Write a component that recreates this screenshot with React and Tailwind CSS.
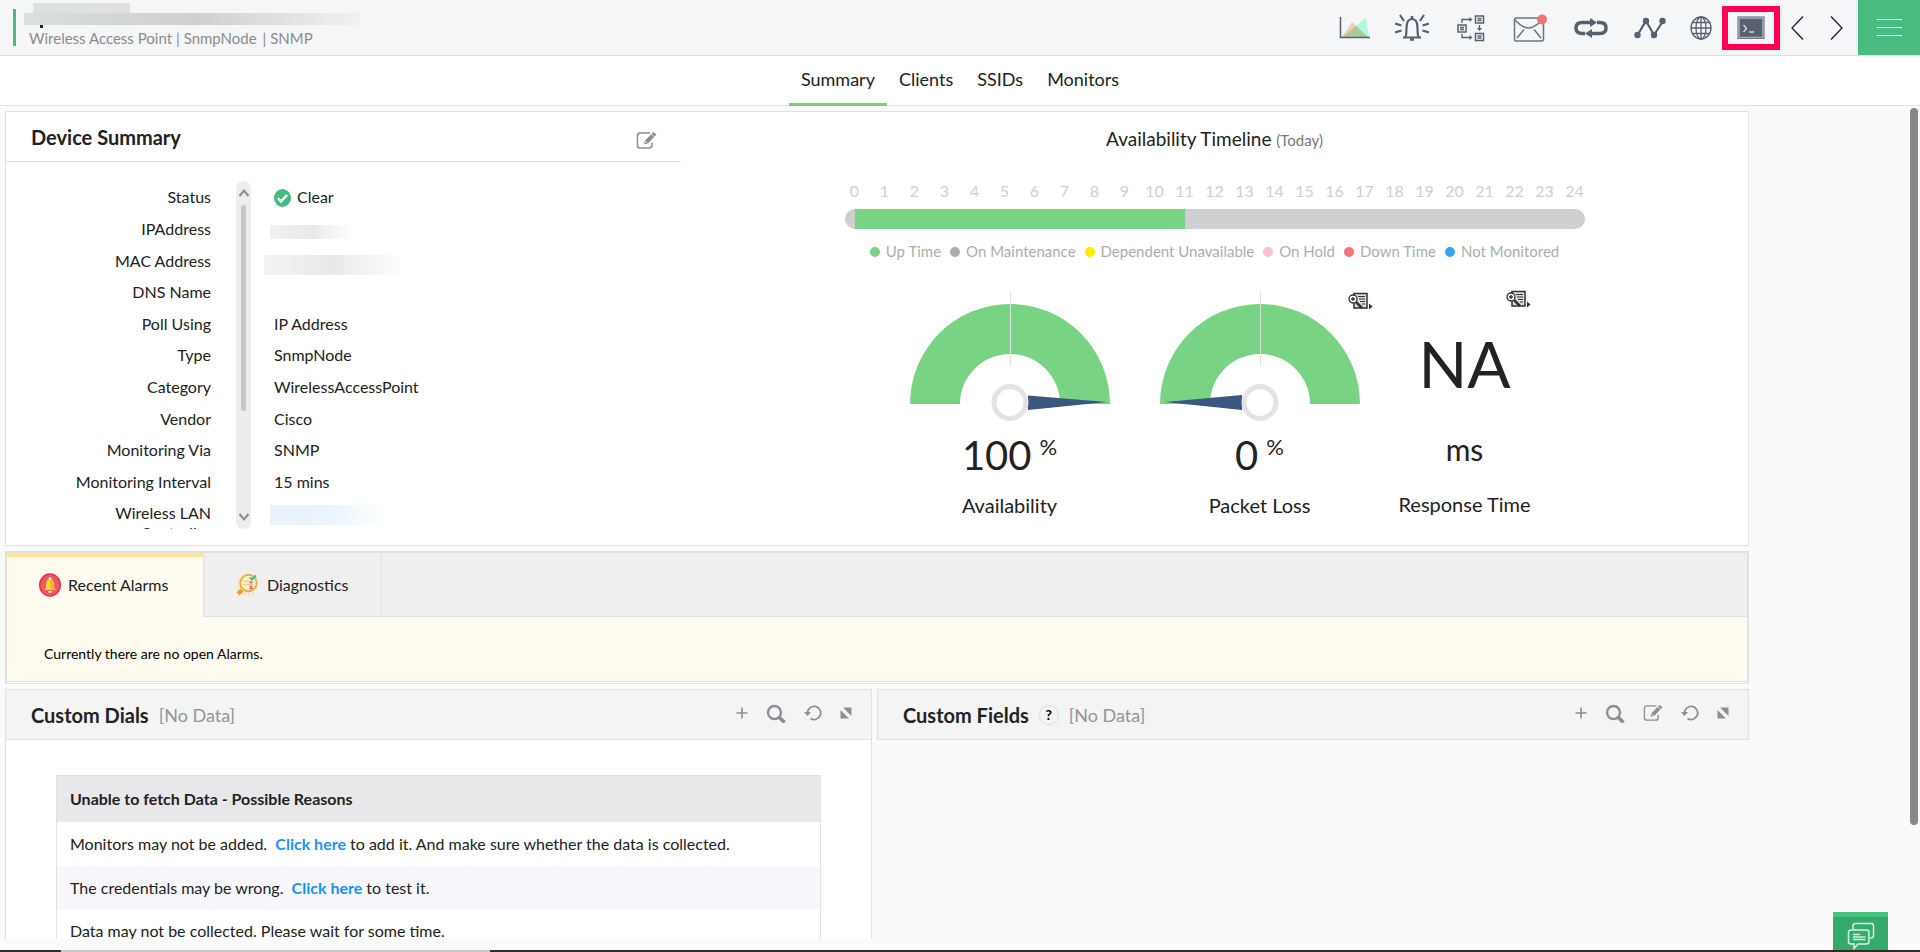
import React, { useState } from 'react';

const NAV_TABS = ['Summary', 'Clients', 'SSIDs', 'Monitors'];

const DETAILS = [
  { label: 'IPAddress', redacted: 'ip' },
  { label: 'MAC Address', redacted: 'mac' },
  { label: 'DNS Name', value: '' },
  { label: 'Poll Using', value: 'IP Address' },
  { label: 'Type', value: 'SnmpNode' },
  { label: 'Category', value: 'WirelessAccessPoint' },
  { label: 'Vendor', value: 'Cisco' },
  { label: 'Monitoring Via', value: 'SNMP' },
  { label: 'Monitoring Interval', value: '15 mins' },
  { label: 'Wireless LAN Controller', redacted: 'lan' },
];

const HOURS = Array.from({ length: 25 }, (_, i) => i);
const UP_HOURS = 11;

const LEGEND = [
  { label: 'Up Time', dot: 'bg-[#78d385]' },
  { label: 'On Maintenance', dot: 'bg-[#adadad]' },
  { label: 'Dependent Unavailable', dot: 'bg-[#ffeb00]' },
  { label: 'On Hold', dot: 'bg-[#ffc0cb]' },
  { label: 'Down Time', dot: 'bg-[#f57374]' },
  { label: 'Not Monitored', dot: 'bg-[#35a3f1]' },
];

/* ---------- Icons ---------- */

const ChartIcon = () => (
  <svg width="32" height="24" viewBox="0 0 32 24">
    <path d="M3 21 13 6l17 15z" fill="#fdc9b6" />
    <path d="M5 21 18 9l9-7 3 19z" fill="#aefbdc" />
    <path d="M3 21 17 10l12 11z" fill="#b0c69b" />
    <path d="M1.5 1v20.5H31" fill="none" stroke="#57606f" strokeWidth="1.5" />
  </svg>
);

const BellIcon = () => (
  <svg width="34" height="28" viewBox="0 0 34 28" fill="none" stroke="#57606f">
    <path d="M8 23.5h18M10.500 23c1-2 1-5 1-9 0-6 2-9 5.500-9s5.500 3 5.500 9c0 4 0 7 1 9" strokeWidth="2.200" />
    <path d="M17 2v3M15 25.500h4" strokeWidth="2.500" />
    <path d="M5 1l4 6M29 1l-4 6M0 9.500l6.500 2M34 9.500l-6.500 2M0 18.500l6.500-2M34 18.500l-6.500-2" strokeWidth="2.200" />
  </svg>
);

const NetworkIcon = () => (
  <svg width="28" height="28" viewBox="0 0 28 28" fill="none" stroke="#57606f">
    <path d="M1 11h8v7H1zM18.5 2h8v7h-8zM18.5 19.5h8v7h-8z" strokeWidth="1.5" />
    <path d="M3 13.5h4M3 15.5h4M20.5 4.5h4M20.5 6.5h4M20.5 22h4M20.5 24h4M5 9V5.5h8M5 20v3.5h8M22.5 11v4" strokeWidth="1.3" />
    <path d="M12.500 3l3 2.500-3 2.500zM12.500 21l3 2.500-3 2.500zM20 14h5l-2.500 3z" fill="#57606f" stroke="none" />
  </svg>
);

const MailIcon = () => (
  <svg width="34" height="28" viewBox="0 0 34 28" fill="none" stroke="#6c7482" strokeWidth="1.5">
    <rect x="1.500" y="4" width="29" height="23" rx="2" />
    <path d="M2 6c3 3 7 8 13.500 8S26 9 29 6M4 24l7-8.500M28 24l-7-8.500" />
    <circle cx="29" cy="5.500" r="5" fill="#f57374" stroke="none" />
  </svg>
);

const LoopIcon = () => (
  <svg width="36" height="20" viewBox="0 0 36 20" fill="none" stroke="#57606f" strokeWidth="3.5">
    <path d="M12 15.500H9C5 15.500 3 13.500 3 10s2-5.500 6-5.500h10M24 4.500h3c4 0 6 2 6 5.500s-2 5.500-6 5.500H17" />
    <path d="M17 0l7 4.500L17 9zM19 11v9l-7-4.500z" fill="#57606f" stroke="none" />
  </svg>
);

const GraphIcon = () => (
  <svg width="32" height="22" viewBox="0 0 32 22" fill="#57606f">
    <path d="M3.500 18 12 4l8 14 9-14" fill="none" stroke="#57606f" strokeWidth="2.2" />
    <circle cx="3.500" cy="18" r="3.200" />
    <circle cx="12" cy="4" r="3.200" />
    <circle cx="20" cy="18" r="3.200" />
    <circle cx="28.500" cy="4" r="3.200" />
  </svg>
);

const GlobeIcon = () => (
  <svg width="22" height="24" viewBox="0 0 22 24" fill="none" stroke="#57606f" strokeWidth="1.3">
    <ellipse cx="11" cy="12" rx="10" ry="11" />
    <ellipse cx="11" cy="12" rx="5" ry="11" />
    <path d="M11 1v22M1 12h20M2.5 6.5h17M2.5 17.5h17" />
  </svg>
);

const TerminalIcon = () => (
  <svg width="28" height="24" viewBox="0 0 28 24">
    <rect x=".5" y=".5" width="27" height="22.5" fill="#57606f" />
    <rect x="2" y="2" width="24" height="19.5" fill="none" stroke="#a9aeb8" strokeWidth="1.5" />
    <path d="M6.500 9l3 3.500-3 3.500M12 16h5" fill="none" stroke="#cfd3da" strokeWidth="1.5" />
  </svg>
);

const ChevronIcon = ({ flip }) => (
  <svg width="14" height="26" viewBox="0 0 14 26" fill="none" stroke="#1f2228" strokeWidth="1.3">
    <path d={flip ? 'M1 1.500 12 13 1 24.500' : 'M13 1.500 2 13l11 11.500'} />
  </svg>
);

const EditIcon = ({ size = 21 }) => (
  <svg width={size} height={size} viewBox="0 0 21 20" fill="none" stroke="#8b8e93">
    <path d="M14 2.500H4a2.500 2.500 0 0 0-2.500 2.500v10A2.500 2.500 0 0 0 4 17.500h9.500A2.500 2.500 0 0 0 16 15v-3" strokeWidth="1.5" />
    <path d="M8 14l1-4 8.500-8.500L20.500 4 12 13z" fill="#8b8e93" stroke="none" />
    <path d="M15.200 3.200l3 3M9 10.500 11.500 13" stroke="#fff" strokeWidth=".8" />
  </svg>
);

const PlusIcon = () => (
  <svg width="12" height="12" viewBox="0 0 12 12" stroke="#8b8e93" strokeWidth="1.6">
    <path d="M6 .5v11M.5 6h11" />
  </svg>
);

const SearchIcon = () => (
  <svg width="20" height="20" viewBox="0 0 20 20" fill="none" stroke="#8b8e93">
    <circle cx="8.5" cy="9.5" r="6.5" strokeWidth="2.4" />
    <path d="M13 14l5.500 5.500" strokeWidth="3.6" />
  </svg>
);

const RefreshIcon = () => (
  <svg width="18" height="18" viewBox="0 0 18 18">
    <path d="M3.500 9a6.600 6.600 0 1 1 3 5.500" fill="none" stroke="#8b8e93" strokeWidth="1.8" />
    <path d="M0 8h7l-3.500 4z" fill="#8b8e93" />
  </svg>
);

const ExpandIcon = () => (
  <svg width="12" height="12" viewBox="0 0 12 12" fill="#8b8e93">
    <path d="M3 .5h8.500V9zM.5 3v8.500H9z" />
  </svg>
);

const ReportIcon = () => (
  <svg width="25" height="18" viewBox="0 0 25 18" fill="none" stroke="#333">
    <path d="M6 1.500h13v14.500H6z" fill="#ddd" strokeWidth="1.5" />
    <path d="M10 4.500h7M11 7h6M12 9.500h5M14 12h3" strokeWidth="1.1" />
    <path d="M7.500 9.500 14 16" strokeWidth="2.5" />
    <circle cx="5" cy="7" r="4" fill="#fff" strokeWidth="1.3" />
    <path d="M5 5v4M3 7h4" strokeWidth="1.3" />
    <path d="M21 11.500v6l3.500-3z" fill="#333" stroke="none" />
  </svg>
);

const AlarmIcon = () => (
  <svg width="22" height="24" viewBox="0 0 22 24">
    <ellipse cx="11" cy="12" rx="10.200" ry="11" fill="#e75a6b" stroke="#f5303f" strokeWidth="1.6" />
    <path d="M5 17c2-1.500 2-3 2-5.500C7 8 8.500 6 11 6s4 2 4 5.500c0 2.500 0 4 2 5.500z" fill="#fdd22f" />
    <path d="M11 6c2.500 0 4 2 4 5.500 0 2.500 0 4 2 5.500h-5z" fill="#f9b41d" />
    <circle cx="11" cy="5.500" r="1.500" fill="#fff0b0" />
    <path d="M9 18h4a2 2 0 0 1-4 0z" fill="#ffe98a" />
  </svg>
);

const DiagnosticsIcon = () => (
  <svg width="22" height="24" viewBox="0 0 22 24" fill="none">
    <path d="M1 5h9v16H2z" fill="#fde3cf" />
    <circle cx="12.500" cy="10" r="8.200" fill="#fdf0c8" stroke="#e3b544" strokeWidth="2" />
    <path d="M6 17l-4 4" stroke="#f5a01c" strokeWidth="4" />
    <path d="M7 8h6M7 11.500h6" stroke="#f6c9a0" strokeWidth="1.3" />
    <path d="M14 4.500l2 2 4-4" stroke="#3dbd7d" strokeWidth="2" />
    <path d="M13.500 8.500l3 3m0-3-3 3M13.500 13l3 3m0-3-3 3" stroke="#f0566b" strokeWidth="1.3" />
    <path d="M8 21.500h2M12 21.500h2M16 20h2" stroke="#f9cfae" strokeWidth="1.5" />
  </svg>
);

const ChatIcon = () => (
  <svg width="28" height="28" viewBox="0 0 28 28" fill="none" stroke="#d3efdf" strokeWidth="1.5">
    <path d="M6 7V4a2.500 2.500 0 0 1 2.500-2.500h15.500A2.500 2.500 0 0 1 26.500 4v9.500A2.500 2.500 0 0 1 24 16h-1" />
    <path d="M4 8h15.500A2.500 2.500 0 0 1 22 10.500v9a2.500 2.500 0 0 1-2.500 2.500H11l-4 4.500V22H4a2.500 2.500 0 0 1-2.500-2.500v-9A2.500 2.500 0 0 1 4 8z" />
    <path d="M6 12.500h7M6 15h12.500M6 17.500h12.500" />
  </svg>
);

/* ---------- Small parts ---------- */

const IconButton = ({ label, className = '', children }) => (
  <button type="button" aria-label={label} className={`flex items-center justify-center ${className}`}>
    {children}
  </button>
);

// Masked values keep their place in the list
const Redacted = ({ kind }) => {
  if (kind === 'ip') {
    return <span className="mt-3 block h-3.5 w-[83px] -ml-1 bg-linear-to-r from-[#f2f2f2] via-[#e9e9e9] to-white" />;
  }
  if (kind === 'mac') {
    return <span className="mt-2.5 block h-5 w-[140px] -ml-2.5 bg-linear-to-r from-[#f3f3f3] via-[#e9e9e9] to-white" />;
  }
  return <span className="mt-2 block h-5 w-[116px] -ml-1 bg-linear-to-r from-[#e9f2fb] via-[#e9f4fd] to-white" />;
};

const Gauge = ({ value, name, report }) => (
  <div className="relative flex w-[250px] flex-col items-center">
    <svg width="250" height="135" viewBox="0 0 250 135">
      <path d="M25 114a100 100 0 0 1 200 0h-50a50 50 0 0 0-100 0z" fill="#78d385" />
      <path d="M125.500 2v74" stroke="#dfdfdf" />
      {value > 50 ? (
        <path d="M143 105.500 222 112l-79 8z" fill="#3b5780" />
      ) : (
        <path d="M107 105 30 112l77 8z" fill="#3b5780" />
      )}
      <circle cx="125" cy="112.500" r="16" fill="#fff" stroke="#e3e3e3" strokeWidth="5" />
    </svg>
    {report && (
      <IconButton label={`${name} report`} className="absolute top-0.5 right-3">
        <ReportIcon />
      </IconButton>
    )}
    <p className="mt-2.5 flex h-10 gap-2 text-[40px] leading-10">
      {value}
      <span className="text-[22px] leading-6">%</span>
    </p>
    <p className="mt-[18px] text-xl leading-6">{name}</p>
  </div>
);

const PanelHeader = ({ title, help, editable }) => (
  <div className="flex h-[50px] items-center border-b border-[#e1e1e1] bg-[#f4f4f4] pr-[19px] pl-[25px]">
    <h2 className="text-xl leading-6 font-bold">{title}</h2>
    {help && (
      <button type="button" aria-label="Help" className="ml-2.5 h-5 w-5 rounded-full border border-[#ddd] text-sm leading-4 font-bold text-black">
        ?
      </button>
    )}
    <span className="ml-2.5 text-lg leading-6 text-[#92959a]">[No Data]</span>
    <div className="ml-auto flex items-center gap-[18px] pb-1">
      <IconButton label="Add"><PlusIcon /></IconButton>
      <IconButton label="Search"><SearchIcon /></IconButton>
      {editable && <IconButton label="Edit"><EditIcon size={20} /></IconButton>}
      <IconButton label="Refresh"><RefreshIcon /></IconButton>
      <IconButton label="Expand"><ExpandIcon /></IconButton>
    </div>
  </div>
);

/* ---------- Sections ---------- */

const Header = () => (
  <header className="flex h-14 shrink-0 border-b border-[#dfe0e1] bg-[#f4f6f8]">
    <div className="flex flex-1 pl-[13px]">
      <div className="mt-[9px] h-[37px] w-[3px] bg-[#48bb7d]" />
      <div className="pt-[3px] pl-2">
        <div className="ml-[9px] h-2.5 w-[97px] bg-[#dfe0e2]" />
        <div className="h-3 w-[336px] bg-linear-to-r from-[#dbdfe0] via-[#cecfd0] to-[#f0f1f3]" />
        <div className="ml-4 h-[3px] w-[3px] bg-[#222]" />
        <p className="ml-[5px] flex gap-1 text-[15px] leading-5 text-[#8c8c8c]">
          <span>Wireless Access Point</span>
          <span>| SnmpNode</span>
          <span className="pl-0.5">| SNMP</span>
        </p>
      </div>
    </div>
    <div className="flex items-center">
      <IconButton label="Performance chart" className="mr-6"><ChartIcon /></IconButton>
      <IconButton label="Alarms" className="mr-7"><BellIcon /></IconButton>
      <IconButton label="Topology" className="mr-7"><NetworkIcon /></IconButton>
      <IconButton label="Messages" className="mr-[26px]"><MailIcon /></IconButton>
      <IconButton label="Sync" className="mr-[25px]"><LoopIcon /></IconButton>
      <IconButton label="Graphs" className="mr-6"><GraphIcon /></IconButton>
      <IconButton label="Web" className="mr-2.5"><GlobeIcon /></IconButton>
      <IconButton label="Terminal" className="mr-2.5 h-11 w-[58px] border-[6px] border-[#ff0055]"><TerminalIcon /></IconButton>
      <IconButton label="Previous" className="mr-[26px]"><ChevronIcon /></IconButton>
      <IconButton label="Next" className="mr-3.5"><ChevronIcon flip /></IconButton>
    </div>
    <button type="button" aria-label="Menu" className="flex w-[62px] flex-col items-center gap-[7px] bg-[#4abc7f] pt-[19px]">
      <span className="h-px w-[25px] bg-white" />
      <span className="h-px w-[25px] bg-white" />
      <span className="h-px w-[25px] bg-white" />
    </button>
  </header>
);

const NavTabs = ({ active, onSelect }) => (
  <nav className="flex h-[50px] shrink-0 justify-center border-b border-[#dfe0e1] bg-white">
    {NAV_TABS.map(tab => (
      <button
        key={tab}
        type="button"
        onClick={() => onSelect(tab)}
        className={`-mb-px border-b-3 px-3 pb-0.5 text-lg ${
          active === tab ? 'border-[#6fd380]' : 'border-transparent'
        }`}
      >
        {tab}
      </button>
    ))}
  </nav>
);

const DeviceSummary = () => (
  <section className="w-[675px] shrink-0">
    <div className="flex h-[50px] items-center border-b border-[#e1e1e1] pr-6 pl-[25px]">
      <h2 className="flex-1 text-xl leading-6 font-bold">Device Summary</h2>
      <IconButton label="Edit device summary" className="pt-2"><EditIcon /></IconButton>
    </div>
    <div className="mt-[19px] mb-4 flex h-[348px] overflow-hidden text-base leading-5">
      <div className="w-[205px] text-right">
        <p className="h-8 pt-1.5">Status</p>
        <div className="grid h-[316px] grid-rows-10">
          {DETAILS.map(item => (
            <p key={item.label} className="h-0 pt-1.5">
              {item.redacted === 'lan' ? <>Wireless LAN<br />Controller</> : item.label}
            </p>
          ))}
        </div>
      </div>
      {/* Scroll track */}
      <div className="mr-[23px] ml-[25px] flex w-[15px] flex-col items-center rounded-full bg-[#ededed] py-1.5">
        <svg width="12" height="12" viewBox="0 0 12 12" fill="none" stroke="#8d8d8d" strokeWidth="2"><path d="M1.500 9 6 3.500 10.500 9" /></svg>
        <div className="mt-1.5 h-[206px] w-[5px] rounded-full bg-[#c6c6c6]" />
        <svg className="mt-auto" width="12" height="12" viewBox="0 0 12 12" fill="none" stroke="#8d8d8d" strokeWidth="2"><path d="M1.500 3 6 8.500 10.500 3" /></svg>
      </div>
      <div>
        <p className="flex h-8 gap-1.5 pt-1.5">
          <svg className="mt-0.5" width="17" height="18" viewBox="0 0 17 18">
            <ellipse cx="8.500" cy="9" rx="8.500" ry="9" fill="#45bb7e" />
            <path d="M4 9l3 3.500L13 6" fill="none" stroke="#fff" strokeWidth="2.4" />
          </svg>
          Clear
        </p>
        <div className="grid h-[316px] grid-rows-10">
          {DETAILS.map(item => (
            <div key={item.label} className="h-0">
              {item.redacted ? <Redacted kind={item.redacted} /> : <p className="pt-1.5">{item.value}</p>}
            </div>
          ))}
        </div>
      </div>
    </div>
  </section>
);

const Availability = () => (
  <section className="flex flex-1 flex-col items-center pt-[15px]">
    <h2 className="text-[19px] leading-6">
      Availability Timeline <span className="text-[15px] text-[#777]">(Today)</span>
    </h2>
    <div className="mt-[29px] flex text-base leading-5 text-[#cfcfcf]">
      {HOURS.map(hour => (
        <span key={hour} className="w-[30px] text-center">{hour}</span>
      ))}
    </div>
    <div className="mt-2 h-5 w-[740px] rounded-full bg-[#cfcfd1] px-2.5">
      <div className="h-full bg-[#78d385]" style={{ width: `${(UP_HOURS / 24) * 100}%` }} />
    </div>
    <ul className="mt-3 flex gap-[9px] text-[15px] leading-5 text-[#adadad]">
      {LEGEND.map(item => (
        <li key={item.label} className="flex items-center gap-1.5">
          <span className={`mt-0.5 h-2.5 w-2.5 rounded-full ${item.dot}`} />
          {item.label}
        </li>
      ))}
    </ul>
    <div className="mt-[29px] flex">
      <Gauge value={100} name="Availability" />
      <Gauge value={0} name="Packet Loss" report />
      <div className="relative flex w-40 flex-col items-center">
        <IconButton label="Response Time report" className="absolute top-0 right-3.5"><ReportIcon /></IconButton>
        <p className="mt-[42px] text-[64px] leading-[64px]">NA</p>
        <p className="mt-[38px] text-[30px] leading-[30px]">ms</p>
        <p className="mt-7 text-xl leading-6">Response Time</p>
      </div>
    </div>
  </section>
);

const Alarms = () => (
  <section className="border border-[#e1e1e1] bg-white pb-px">
    <div className="border border-[#e1e1e1] bg-[#fffbee]">
      <div className="flex h-16 bg-[#efefef] text-base">
        <button type="button" className="flex w-[197px] items-center gap-[7px] border-t-4 border-r border-t-[#ffe596] border-r-[#e1e1e1] bg-[#fffbee] pb-1 pl-8">
          <AlarmIcon />
          Recent Alarms
        </button>
        <button type="button" className="flex w-[178px] items-center gap-[9px] border-r border-b border-[#e1e1e1] pl-8">
          <DiagnosticsIcon />
          Diagnostics
        </button>
        <div className="flex-1 border-b border-[#e1e1e1]" />
      </div>
      <p className="h-16 pt-[27px] pl-[37px] text-sm leading-5 text-black">Currently there are no open Alarms.</p>
    </div>
  </section>
);

const CustomDials = () => (
  <section className="h-[400px] border border-[#e1e1e1] bg-white">
    <PanelHeader title="Custom Dials" />
    <table className="mx-[50px] mt-[35px] w-[765px] border border-[#e1e1e5] text-left text-base">
      <thead>
        <tr className="h-[46px] bg-[#e8e8ea]">
          <th className="px-[13px] font-bold">Unable to fetch Data - Possible Reasons</th>
        </tr>
      </thead>
      <tbody>
        <tr className="h-11">
          <td className="px-[13px]">
            Monitors may not be added.&nbsp; <a href="#add" className="font-bold text-[#1e90ff]">Click here</a> to add it. And make sure whether the data is collected.
          </td>
        </tr>
        <tr className="h-11 bg-[#f8f8fc]">
          <td className="px-[13px]">
            The credentials may be wrong.&nbsp; <a href="#test" className="font-bold text-[#1e90ff]">Click here</a> to test it.
          </td>
        </tr>
        <tr className="h-11">
          <td className="px-[13px]">Data may not be collected. Please wait for some time.</td>
        </tr>
      </tbody>
    </table>
  </section>
);

export default function App() {
  const [tab, setTab] = useState('Summary');

  return (
    <div className="relative flex h-screen flex-col overflow-hidden bg-[#fafafa] font-[Lato,sans-serif] text-[#222]">
      <Header />
      <NavTabs active={tab} onSelect={setTab} />
      <div className="flex min-h-0 flex-1 pr-0.5">
        <main className="mb-[11px] flex flex-1 flex-col gap-[5px] overflow-hidden pt-[5px] pr-[161px] pl-[5px]">
          <div className="flex shrink-0 border border-[#e1e1e1] bg-white">
            <DeviceSummary />
            <Availability />
          </div>
          <Alarms />
          <div className="grid shrink-0 grid-cols-[867fr_872fr] items-start gap-[5px]">
            <CustomDials />
            <section className="border border-b-0 border-[#e1e1e1]">
              <PanelHeader title="Custom Fields" help editable />
            </section>
          </div>
        </main>
        {/* Page scroll thumb */}
        <div className="mt-0.5 h-[717px] w-2 rounded-full bg-[#888]" />
      </div>
      <button type="button" aria-label="Feedback" className="absolute right-8 bottom-0.5 flex h-[38px] w-[55px] items-center justify-center border-t-5 border-[#45c180] bg-[#35ab6b] pt-1">
        <ChatIcon />
      </button>
      <footer className="flex h-0.5 shrink-0 bg-[#2b2d2e] pl-[61px]">
        <div className="w-[429px] bg-[#c8c8c8]" />
      </footer>
    </div>
  );
}
